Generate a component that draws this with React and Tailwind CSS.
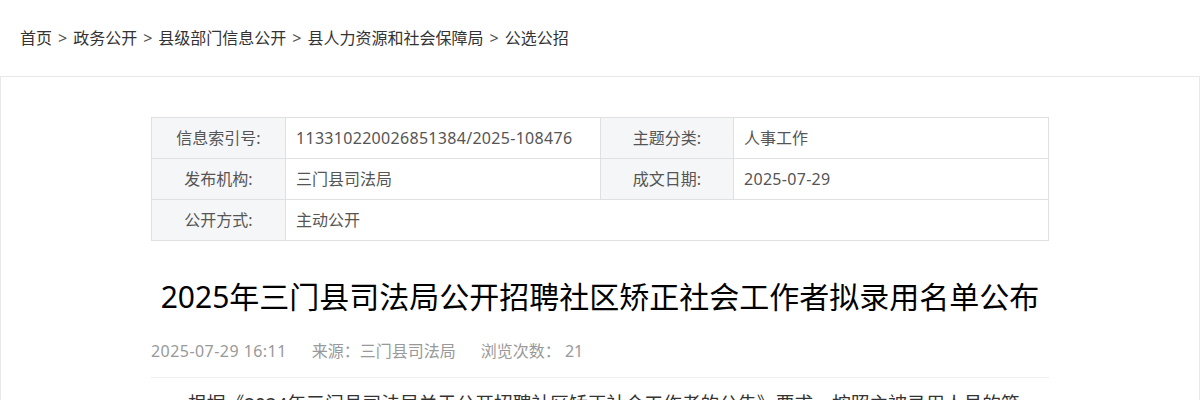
export default function App() {
  const crumbs = ["首页", "政务公开", "县级部门信息公开", "县人力资源和社会保障局", "公选公招"];

  return (
    <div
      className="min-h-screen bg-white text-[#333]"
      style={{ fontFamily: '"Noto Sans", "Noto Sans CJK SC", sans-serif' }}
    >
      <div className="h-[76px] flex items-center px-5 text-[16px] text-[#333]">
        {crumbs.map((c, i) => (
          <span key={c} className="flex items-center">
            {i > 0 && <span className="mx-[6px] text-[#555]">&gt;</span>}
            <span>{c}</span>
          </span>
        ))}
      </div>

      <div className="border border-[#e8e8e8] border-b-0 min-h-[324px]">
        <div className="w-[898px] mx-auto pt-10">
          <table className="w-full border-collapse text-[16px] text-[#555]">
            <tbody>
              <tr className="h-[41px]">
                <td className="w-[134px] border border-[#e0e0e0] bg-[#f5f6f8] text-center">信息索引号:</td>
                <td className="w-[315px] border border-[#e0e0e0] px-[10px] tracking-[0.3px]">113310220026851384/2025-108476</td>
                <td className="w-[133px] border border-[#e0e0e0] bg-[#f5f6f8] text-center">主题分类:</td>
                <td className="border border-[#e0e0e0] px-[10px]">人事工作</td>
              </tr>
              <tr className="h-[41px]">
                <td className="border border-[#e0e0e0] bg-[#f5f6f8] text-center">发布机构:</td>
                <td className="border border-[#e0e0e0] px-[10px]">三门县司法局</td>
                <td className="border border-[#e0e0e0] bg-[#f5f6f8] text-center">成文日期:</td>
                <td className="border border-[#e0e0e0] px-[10px] tracking-[0.3px]">2025-07-29</td>
              </tr>
              <tr className="h-[41px]">
                <td className="border border-[#e0e0e0] bg-[#f5f6f8] text-center">公开方式:</td>
                <td colSpan={3} className="border border-[#e0e0e0] px-[10px]">主动公开</td>
              </tr>
            </tbody>
          </table>

          <h1 className="mt-[36px] text-center text-[30px] leading-[40px] text-[#000]">
            2025年三门县司法局公开招聘社区矫正社会工作者拟录用名单公布
          </h1>

          <div className="mt-[22px] flex gap-[25px] text-[16px] text-[#999]">
            <span className="tracking-[0.45px]">2025-07-29 16:11</span>
            <span>来源：三门县司法局</span>
            <span>浏览次数： 21</span>
          </div>

          <div className="mt-[14px] border-t border-[#eee]" />

          <p className="mt-[10px] text-[18.8px] leading-[32px] text-[#333] indent-[37px]">
            根据《2024年三门县司法局关于公开招聘社区矫正社会工作者的公告》要求，按照主被录用人员的笔试、面试、体检和考察结果，现将拟录用人员名单公布如下。
          </p>
        </div>
      </div>
    </div>
  );
}
